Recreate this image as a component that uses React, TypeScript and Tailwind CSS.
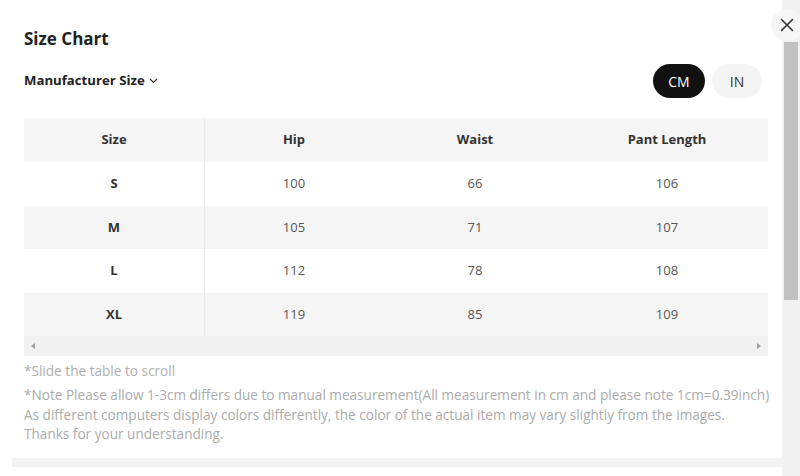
import React from "react";

const rows = [
  { size: "S", hip: "100", waist: "66", len: "106" },
  { size: "M", hip: "105", waist: "71", len: "107" },
  { size: "L", hip: "112", waist: "78", len: "108" },
  { size: "XL", hip: "119", waist: "85", len: "109" },
];

export default function App() {
  return (
    <div className="w-[800px] h-[476px] flex bg-white overflow-hidden relative font-['Open_Sans',sans-serif]">
      <div className="w-[782px] flex flex-col">
        <div className="pl-6 pr-[14px] pt-[27px]">
          <h1 className="text-[17px] font-bold leading-6 text-[#222]">Size Chart</h1>
          <div className="mt-[13px] flex items-center justify-between h-[34px]">
            <div className="flex items-center gap-[4px] text-[13.2px] font-bold text-[#222]">
              <span>Manufacturer Size</span>
              <svg width="9" height="6" viewBox="0 0 9 6" fill="none" className="mt-[1px]">
                <path d="M1 1l3.5 3.5L8 1" stroke="#333" strokeWidth="1.2" />
              </svg>
            </div>
            <div className="flex items-center gap-[7px] mr-[6px]">
              <div className="w-[52px] h-[34px] rounded-full bg-[#111] text-white text-[14px] flex items-center justify-center">CM</div>
              <div className="w-[50px] h-[34px] rounded-full bg-[#f4f4f4] text-[#333] text-[14px] flex items-center justify-center">IN</div>
            </div>
          </div>
          <div className="mt-5">
            <div className="grid grid-cols-[181px_178px_184px_200px] h-11 bg-[#f5f5f5] text-[13px] font-bold text-[#333]">
              <div className="flex items-center justify-center border-r border-[#eaeaea]">Size</div>
              <div className="flex items-center justify-center">Hip</div>
              <div className="flex items-center justify-center">Waist</div>
              <div className="flex items-center justify-center">Pant Length</div>
            </div>
            {rows.map((r, i) => (
              <div
                key={r.size}
                className={`grid grid-cols-[181px_178px_184px_200px] h-[43.5px] text-[13px] text-[#555] ${i % 2 === 1 ? "bg-[#f5f5f5]" : "bg-white"}`}
              >
                <div className="flex items-center justify-center border-r border-[#eaeaea] font-bold text-[#333]">{r.size}</div>
                <div className="flex items-center justify-center">{r.hip}</div>
                <div className="flex items-center justify-center">{r.waist}</div>
                <div className="flex items-center justify-center">{r.len}</div>
              </div>
            ))}
            <div className="h-5 bg-[#f1f1f1] flex items-center justify-between px-[7px]">
              <svg width="4" height="6" viewBox="0 0 4 6"><path d="M4 0v6L0 3z" fill="#a3a3a3" /></svg>
              <svg width="4" height="6" viewBox="0 0 4 6"><path d="M0 0v6l4-3z" fill="#a3a3a3" /></svg>
            </div>
          </div>
          <p className="mt-[5px] text-[13.6px] leading-[19.3px] text-[#b0b0b0]">*Slide the table to scroll</p>
          <p className="mt-[5px] text-[13.6px] leading-[19.3px] text-[#ababab] whitespace-nowrap">
            *Note Please allow 1-3cm differs due to manual measurement(All measurement in cm and please note 1cm=0.39inch)
            <br />
            As different computers display colors differently, the color of the actual item may vary slightly from the images.
            <br />
            Thanks for your understanding.
          </p>
        </div>
        <div className="mt-auto ml-3 h-[9px] bg-[#f2f2f2]" />
        <div className="h-[9px]" />
      </div>
      <div className="w-[18px] bg-[#f1f1f1] flex flex-col">
        <div className="mt-[42px] mx-[2px] h-[258px] bg-[#c1c1c1]" />
      </div>
      <button className="absolute left-[771px] top-[9px] w-8 h-8 rounded-full bg-[#f6f6f6] flex items-center justify-center">
        <svg width="14" height="14" viewBox="0 0 14 14" fill="none">
          <path d="M1.5 1.5l11 11M12.5 1.5l-11 11" stroke="#333" strokeWidth="1.6" strokeLinecap="round" />
        </svg>
      </button>
    </div>
  );
}
